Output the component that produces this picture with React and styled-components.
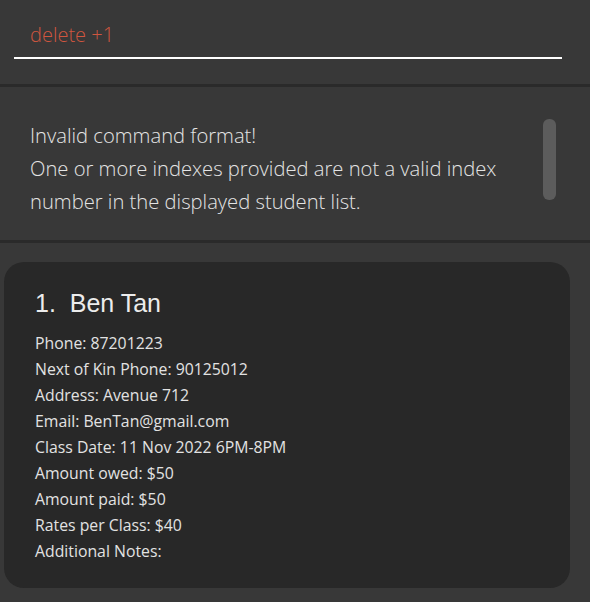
import React from "react";
import styled, { createGlobalStyle } from "styled-components";

const GlobalStyle = createGlobalStyle`
  html, body {
    margin: 0;
    padding: 0;
    background: #383838;
  }
`;

const Window = styled.div`
  width: 590px;
  height: 602px;
  background: #383838;
  display: flex;
  flex-direction: column;
  overflow: hidden;
  font-family: "Open Sans", "Noto Sans", sans-serif;
`;

const CommandBox = styled.div`
  height: 84px;
  padding: 16px 28px 0 14px;
  box-sizing: border-box;
`;

const CommandInput = styled.div`
  height: 43px;
  border-bottom: 2px solid #ffffff;
  padding-left: 16px;
  display: flex;
  align-items: center;
  padding-bottom: 5px;
  box-sizing: border-box;
  font-size: 20px;
  font-weight: 300;
  color: ${(p) => (p.error ? "#d0563f" : "#ffffff")};
`;

const Divider = styled.div`
  height: 3px;
  background: #2a2a2a;
  flex-shrink: 0;
`;

const ResultBox = styled.div`
  height: 153px;
  padding: 32px 34px 0 30px;
  box-sizing: border-box;
  display: flex;
  gap: 12px;
`;

const ResultText = styled.div`
  flex: 1;
  font-size: 20.2px;
  font-weight: 300;
  line-height: 33px;
  color: #e4e4e4;
`;

const ScrollThumb = styled.div`
  width: 13px;
  height: 81px;
  border-radius: 6px;
  background: #5c5c5c;
  flex-shrink: 0;
`;

const ListArea = styled.div`
  flex: 1;
  padding: 19px 20px 14px 4px;
  box-sizing: border-box;
  display: flex;
  flex-direction: column;
`;

const Card = styled.div`
  flex: 1;
  background: #282828;
  border-radius: 20px;
  padding: 25px 20px 0 31px;
`;

const Name = styled.div`
  font-family: "Liberation Sans", Arial, sans-serif;
  font-size: 25px;
  line-height: 32px;
  color: #ececec;
  margin-bottom: 11px;
  white-space: pre;
`;

const Field = styled.div`
  font-size: 15.8px;
  line-height: 26px;
  color: #e2e2e2;
`;

const student = {
  index: 1,
  name: "Ben Tan",
  fields: [
    "Phone: 87201223",
    "Next of Kin Phone: 90125012",
    "Address: Avenue 712",
    "Email: BenTan@gmail.com",
    "Class Date: 11 Nov 2022 6PM-8PM",
    "Amount owed: $50",
    "Amount paid: $50",
    "Rates per Class: $40",
    "Additional Notes:",
  ],
};

export default function App() {
  return (
    <>
      <GlobalStyle />
      <Window>
        <CommandBox>
          <CommandInput error>delete +1</CommandInput>
        </CommandBox>
        <Divider />
        <ResultBox>
          <ResultText>
            Invalid command format!
            <br />
            One or more indexes provided are not a valid index number in the
            displayed student list.
          </ResultText>
          <ScrollThumb />
        </ResultBox>
        <Divider />
        <ListArea>
          <Card>
            <Name>{`${student.index}.  ${student.name}`}</Name>
            {student.fields.map((f) => (
              <Field key={f}>{f}</Field>
            ))}
          </Card>
        </ListArea>
      </Window>
    </>
  );
}
